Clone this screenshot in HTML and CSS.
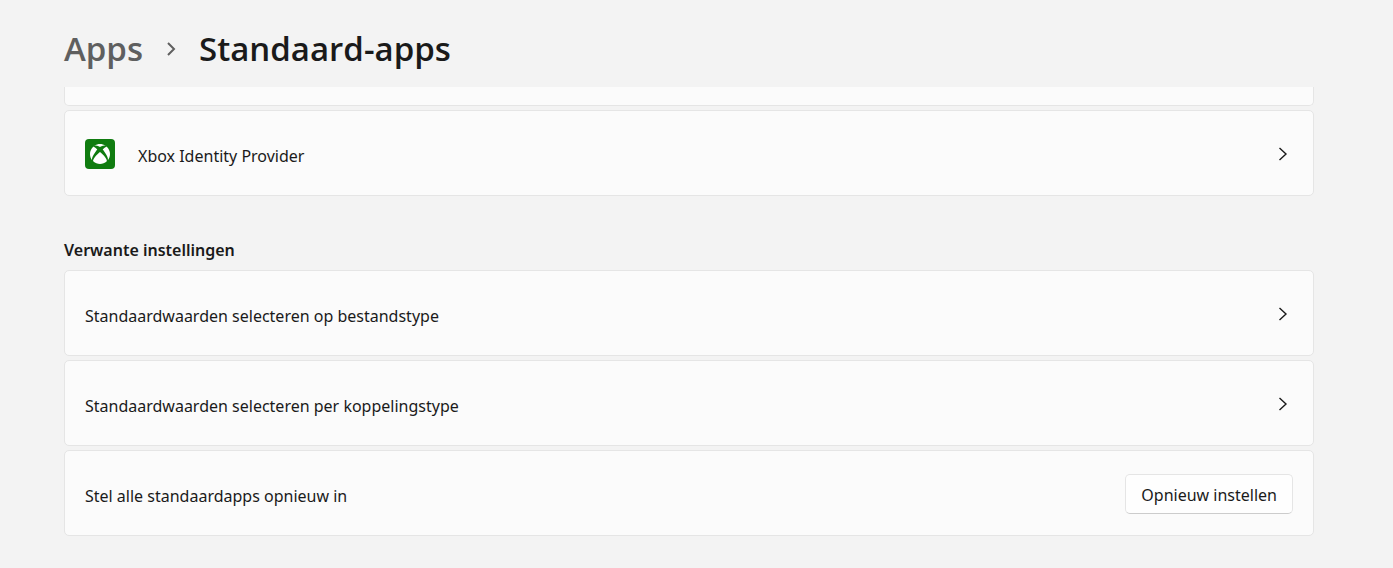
FILE: index.html
```html
<!DOCTYPE html>
<html lang="nl">
<head>
<meta charset="utf-8">
<meta name="viewport" content="width=device-width, initial-scale=1">
<title>Standaard-apps</title>
<link rel="stylesheet" href="styles.css">
</head>
<body>
<header class="header">
  <nav class="breadcrumb" aria-label="Kruimelpad">
    <a class="crumb" href="#apps">Apps</a>
    <svg class="crumb-sep" viewBox="0 0 12 16" aria-hidden="true"><path d="m3 2 6 6-6 6"/></svg>
    <h1 class="title">Standaard-apps</h1>
  </nav>
</header>
<main class="content">
  <div class="card card-clipped"></div>
  <a class="card" href="#xbox">
    <svg class="app-icon" viewBox="0 0 30 30" aria-hidden="true">
      <rect width="30" height="30" rx="4" fill="#107c10"/>
      <path transform="translate(5 5) scale(.8333)" fill="#fff" d="M4.102 21.033C6.211 22.881 8.977 24 12 24c3.026 0 5.789-1.119 7.902-2.967 1.877-1.912-4.316-8.709-7.902-11.417-3.582 2.708-9.779 9.505-7.898 11.417zm11.160-14.406c2.500 2.961 7.484 10.313 6.076 12.912C23.002 17.480 24 14.861 24 12.004c0-3.340-1.365-6.362-3.570-8.536 0 0-.027-.022-.082-.042-.063-.022-.152-.045-.281-.045-.592 0-1.985.434-4.805 3.246zM3.654 3.426c-.057.020-.082.041-.086.042C1.365 5.642 0 8.664 0 12.004c0 2.854.998 5.473 2.661 7.533-1.401-2.605 3.579-9.951 6.080-12.910-2.820-2.813-4.216-3.245-4.806-3.245-.131 0-.223.021-.281.046zM12 3.551S9.055 1.828 6.755 1.746c-.903-.033-1.454.295-1.521.339C7.379.646 9.659 0 11.984 0H12c2.334 0 4.605.646 6.766 2.085-.068-.046-.615-.372-1.520-.339C14.946 1.828 12 3.551 12 3.551z"/>
    </svg>
    <span class="label">Xbox Identity Provider</span>
    <svg class="chevron" viewBox="0 0 10 16" aria-hidden="true"><path d="m1.500 2 6.500 6-6.500 6"/></svg>
  </a>
  <h2 class="section-title">Verwante instellingen</h2>
  <a class="card" href="#bestandstype">
    <span class="label">Standaardwaarden selecteren op bestandstype</span>
    <svg class="chevron" viewBox="0 0 10 16" aria-hidden="true"><path d="m1.500 2 6.500 6-6.500 6"/></svg>
  </a>
  <a class="card" href="#koppelingstype">
    <span class="label">Standaardwaarden selecteren per koppelingstype</span>
    <svg class="chevron" viewBox="0 0 10 16" aria-hidden="true"><path d="m1.500 2 6.500 6-6.500 6"/></svg>
  </a>
  <div class="card">
    <span class="label" id="reset-label">Stel alle standaardapps opnieuw in</span>
    <button class="button" type="button" aria-describedby="reset-label">Opnieuw instellen</button>
  </div>
</main>
</body>
</html>
```
FILE: styles.css
```css
* { box-sizing: border-box; }
body {
  margin: 0;
  background: #f3f3f3;
  color: #1a1a1a;
  font: 16px/24px "Segoe UI", "Noto Sans", sans-serif;
}
.header { padding: 25px 80px 14px 64px; }
.breadcrumb { display: flex; align-items: center; gap: 22px; }
.crumb, .title { margin: 0; font-family: "Segoe UI", "Open Sans", sans-serif; font-size: 33px; line-height: 48px; font-weight: 600; }
.crumb { color: #5f5f5f; text-decoration: none; }
.crumb-sep { width: 12px; height: 16px; fill: none; stroke: #5f5f5f; stroke-width: 2; }
.content { display: flex; flex-direction: column; gap: 4px; padding: 0 79px 32px 64px; }
.card {
  display: flex;
  align-items: center;
  min-height: 86px;
  padding: 2px 20px 0;
  border: 1px solid #e5e5e5;
  border-radius: 5px;
  background: #fbfbfb;
  color: inherit;
  text-decoration: none;
}
.card-clipped { min-height: 19px; padding: 0; border-top: 0; border-radius: 0 0 5px 5px; }
.label { flex: 1; padding-top: 4px; }
.app-icon { width: 30px; height: 30px; margin-right: 23px; }
.chevron { width: 10px; height: 16px; margin-right: 5px; fill: none; stroke: #1a1a1a; stroke-width: 1.4; }
.section-title { margin: 38px 0 4px; font-size: 16px; line-height: 24px; font-weight: 600; }
.button {
  height: 40px;
  padding: 2px 15px 0;
  border: 1px solid #e5e5e5;
  border-bottom-color: #ccc;
  border-radius: 5px;
  background: #fefefe;
  color: inherit;
  font: inherit;
}
```
